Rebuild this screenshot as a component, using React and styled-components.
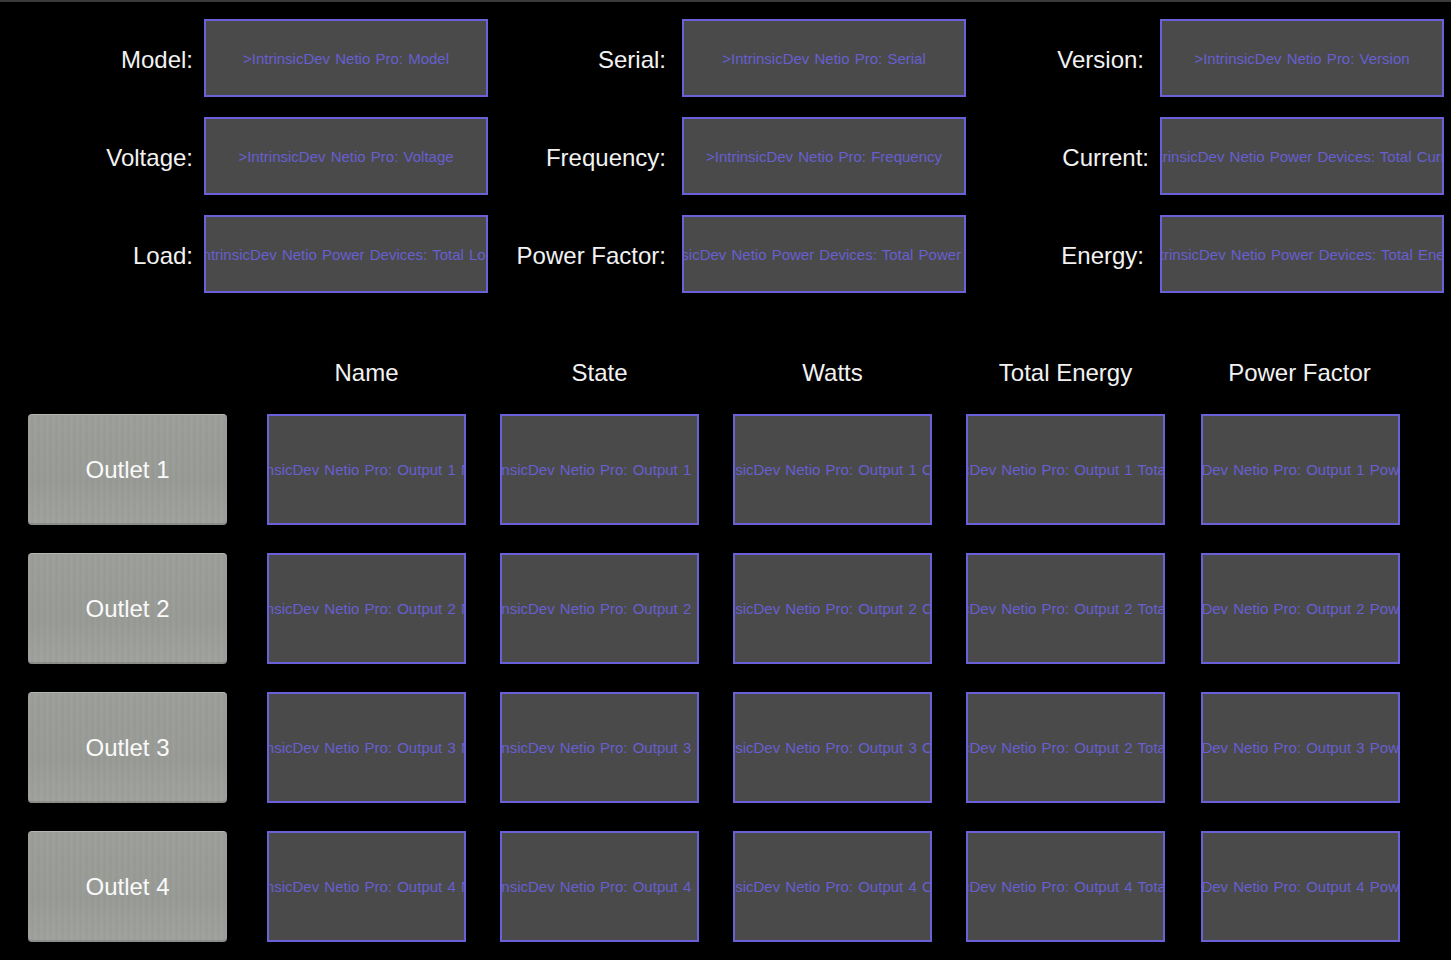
import React from 'react';
import styled, { createGlobalStyle } from 'styled-components';

const GlobalStyle = createGlobalStyle`
  html, body {
    margin: 0;
    padding: 0;
    background: #000;
  }
  body {
    font-family: "Liberation Sans", Arial, sans-serif;
    border-top: 2px solid #3a3a3a;
  }
`;

const Page = styled.div`
  width: 1451px;
  height: 958px;
  background: #000;
  padding-top: 17px;
  box-sizing: border-box;
  overflow: hidden;
`;

const InfoGrid = styled.div`
  display: grid;
  grid-template-columns: repeat(3, 478px);
  row-gap: 20px;
  padding-left: 10px;
`;

const Field = styled.div`
  display: grid;
  grid-template-columns: 194px 284px;
  align-items: center;
`;

const Label = styled.div`
  text-align: right;
  padding-right: ${(p) => p.$gap}px;
  padding-top: 3px;
  color: #f2f2f2;
  font-size: 24px;
`;

const ValueBox = styled.div`
  display: flex;
  align-items: center;
  justify-content: center;
  height: ${(p) => p.$h}px;
  box-sizing: border-box;
  background: #4a4a4a;
  border: 2px solid #6a60d8;
  overflow: hidden;
  white-space: nowrap;
  color: #675fd0;
  font-size: 15px;
  word-spacing: 1px;
`;

const Table = styled.div`
  display: grid;
  grid-template-columns: 205px 199px 199px 199px 199px 201px;
  column-gap: 34px;
  row-gap: 28px;
  grid-auto-rows: 111px;
  grid-template-rows: 30px;
  margin-top: 63px;
  padding-left: 28px;
`;

const Header = styled.div`
  color: #f2f2f2;
  font-size: 24px;
  line-height: 30px;
  padding-top: 2px;
  text-align: center;
`;

const OutletButton = styled.button`
  width: 199px;
  height: 111px;
  border: none;
  border-radius: 4px;
  border-top: 1px solid #b4b6b2;
  background:
    repeating-linear-gradient(90deg, rgba(255, 255, 255, 0.015) 0 3px, rgba(0, 0, 0, 0.015) 3px 6px),
    linear-gradient(180deg, #9c9e9a 0%, #989a96 60%, #a0a29e 100%);
  box-shadow: inset 0 -2px 0 rgba(0, 0, 0, 0.12);
  color: #fafafa;
  font-family: "Liberation Sans", Arial, sans-serif;
  font-size: 24px;
  cursor: pointer;
`;

const LastCell = styled(ValueBox)`
  margin-left: 2px;
`;

const topFields = [
  [
    ['Model:', 11, 'Pro: Model'],
    ['Serial:', 16, 'Pro: Serial'],
    ['Version:', 16, 'Pro: Version'],
  ],
  [
    ['Voltage:', 11, 'Pro: Voltage'],
    ['Frequency:', 16, 'Pro: Frequency'],
    ['Current:', 11, 'Power Devices: Total Current'],
  ],
  [
    ['Load:', 11, 'Power Devices: Total Load'],
    ['Power Factor:', 16, 'Power Devices: Total Power Factor'],
    ['Energy:', 16, 'Power Devices: Total Energy'],
  ],
];

const columns = ['Name', 'State', 'Watts', 'Total Energy', 'Power Factor'];

const cellText = (n, col) => {
  const keys = {
    Name: 'Name',
    State: 'State',
    Watts: 'Current',
    'Total Energy': 'Total Energy',
    'Power Factor': 'Power Factor',
  };
  // outlet 3 shows output 2's energy in the original
  const num = col === 'Total Energy' && n === 3 ? 2 : n;
  return `>IntrinsicDev Netio Pro: Output ${num} ${keys[col]}`;
};

const App = () => {
  return (
    <Page>
      <GlobalStyle />
      <InfoGrid>
        {topFields.flat().map(([label, gap, value]) => (
          <Field key={label}>
            <Label $gap={gap}>{label}</Label>
            <ValueBox $h={78}>{`>IntrinsicDev Netio ${value}`}</ValueBox>
          </Field>
        ))}
      </InfoGrid>
      <Table>
        <div />
        {columns.map((c) => (
          <Header key={c}>{c}</Header>
        ))}
        {[1, 2, 3, 4].map((n) => (
          <React.Fragment key={n}>
            <OutletButton>Outlet {n}</OutletButton>
            {columns.map((c, i) =>
              i === columns.length - 1 ? (
                <LastCell key={c} $h={111}>
                  {cellText(n, c)}
                </LastCell>
              ) : (
                <ValueBox key={c} $h={111}>
                  {cellText(n, c)}
                </ValueBox>
              )
            )}
          </React.Fragment>
        ))}
      </Table>
    </Page>
  );
};

export default App;
